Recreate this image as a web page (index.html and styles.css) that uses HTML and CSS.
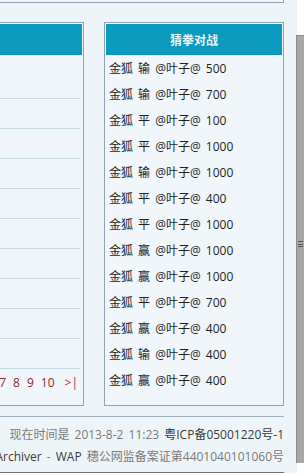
FILE: index.html
```html
<!DOCTYPE html>
<html lang="zh-CN">
<head>
  <meta charset="UTF-8">
  <title>猜拳对战</title>
  <link rel="stylesheet" href="styles.css">
</head>
<body>

  <div class="wrap">
    <div class="topbar"></div>

    <div class="main">
      <div class="panel left">
        <div class="panel-head"></div>
        <ul class="threads">
          <li class="first"></li>
          <li></li>
          <li></li>
          <li></li>
          <li></li>
          <li></li>
          <li></li>
          <li></li>
          <li></li>
          <li></li>
        </ul>
        <div class="pager">
          <a href="#">1</a><a href="#">2</a><a href="#">3</a><a href="#">4</a><a href="#">5</a><a href="#">6</a><a href="#">7</a><a href="#">8</a><a href="#">9</a><a href="#">10</a><a href="#" class="last">&gt;|</a>
        </div>
      </div>

      <div class="panel right">
        <div class="panel-head"><h2>猜拳对战</h2></div>
        <ul class="games">
          <li>金狐 输 @叶子@ 500</li>
          <li>金狐 输 @叶子@ 700</li>
          <li>金狐 平 @叶子@ 100</li>
          <li>金狐 平 @叶子@ 1000</li>
          <li>金狐 输 @叶子@ 1000</li>
          <li>金狐 平 @叶子@ 400</li>
          <li>金狐 平 @叶子@ 1000</li>
          <li>金狐 赢 @叶子@ 1000</li>
          <li>金狐 赢 @叶子@ 1000</li>
          <li>金狐 平 @叶子@ 700</li>
          <li>金狐 赢 @叶子@ 400</li>
          <li>金狐 输 @叶子@ 400</li>
          <li>金狐 赢 @叶子@ 400</li>
        </ul>
      </div>
    </div>

    <footer class="footer">
      <p>现在时间是 2013-8-2 11:23 <a href="#">粤ICP备05001220号-1</a></p>
      <p><a href="#">Archiver</a> - <a href="#">WAP</a> 穗公网监备案证第4401040101060号</p>
    </footer>
  </div>

  <div class="scrollbar"><span class="grip"></span></div>

</body>
</html>
```

FILE: styles.css
```css
* {
  margin: 0;
  padding: 0;
  box-sizing: border-box;
}

body {
  font-family: "Open Sans", "Noto Sans CJK SC", sans-serif;
  font-size: 12px;
  color: #222;
  background-color: #fff;
  overflow: hidden;
}

.wrap {
  margin-left: -140px;
  width: 437px;
  background-color: #eef5f9;
}

.topbar {
  height: 3px;
  width: 424px;
  border-bottom: 1px solid #8fa3b2;
  border-right: 1px solid #8fa3b2;
}

.main {
  display: flex;
  gap: 20px;
  padding-top: 19px;
  width: 424px;
}

.panel {
  border: 1px solid #8fa3b2;
  background-color: #f0f6fa;
}

.left {
  width: 224px;
}

.right {
  width: 180px;
}

.panel-head {
  height: 31px;
  margin: 1px;
  background-color: #0b99bd;
  display: flex;
  align-items: center;
  justify-content: center;
}

.panel-head h2 {
  font-family: "Noto Sans CJK SC", sans-serif;
  font-size: 12px;
  font-weight: bold;
  color: #e9f6fa;
}

.threads {
  list-style: none;
  padding-right: 3px;
}

.threads li {
  height: 30px;
  border-bottom: 1px solid #c9dbe6;
}

.threads li.first {
  height: 43px;
}

.pager {
  height: 36px;
  display: flex;
  align-items: flex-start;
  justify-content: flex-end;
  padding: 5px 5px 0 0;
  gap: 7px;
  font-size: 12px;
}

.pager a {
  color: #8a2b2b;
  text-decoration: none;
}

.pager a.last {
  margin-left: 3px;
  color: #b03030;
}

.games {
  list-style: none;
  padding: 0 0 10px 4px;
}

.games li {
  height: 26px;
  line-height: 26px;
  font-size: 12px;
  color: #1e1e1e;
  word-spacing: 2px;
  white-space: nowrap;
}

.footer {
  margin-top: 10px;
  border-top: 1px solid #9fb0bd;
  border-bottom: 1px solid #707070;
  width: 424px;
  padding: 7px 0 4px;
  text-align: right;
  color: #7a7a7a;
  word-spacing: 2px;
}

.footer p {
  line-height: 22px;
  white-space: nowrap;
}

.footer a {
  color: #3a3a3a;
  text-decoration: none;
}

.scrollbar {
  position: absolute;
  top: 35px;
  right: 0;
  width: 8px;
  height: 428px;
  background-color: #a8a8a8;
  border-left: 1px solid #8c8c8c;
  border-top: 1px solid #8c8c8c;
}

.grip {
  position: absolute;
  top: 205px;
  left: 1px;
  width: 5px;
  height: 6px;
  border-top: 1px solid #555;
  border-bottom: 1px solid #555;
}

.grip::after {
  content: "";
  position: absolute;
  top: 1px;
  left: 0;
  width: 5px;
  height: 1px;
  border-bottom: 1px solid #555;
}
```
